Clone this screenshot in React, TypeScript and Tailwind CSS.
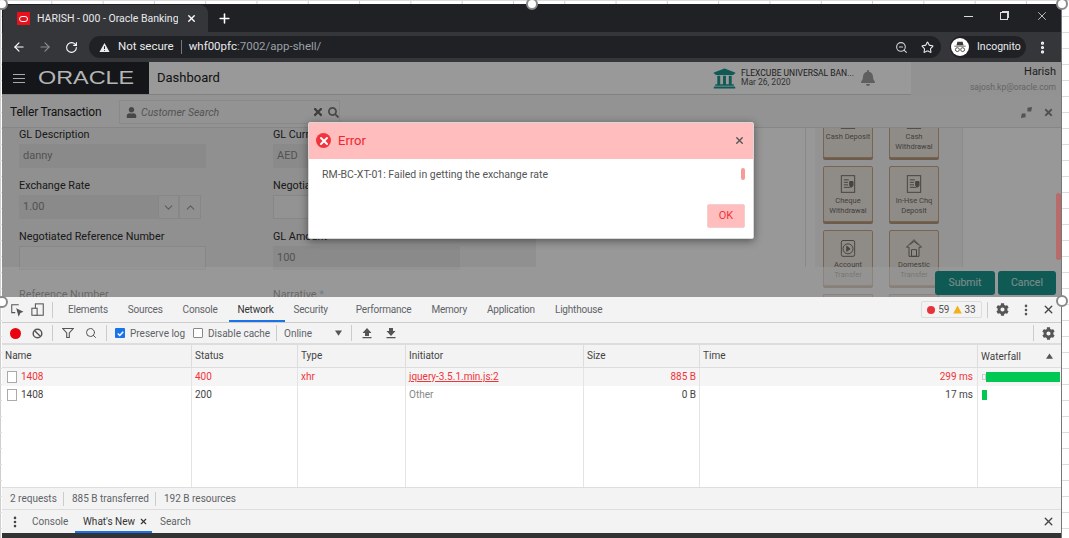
import { ArrowLeft, ArrowRight, ChevronDown, ChevronUp, MoreVertical, Plus, RotateCw, Search, Star, X, ZoomOut } from "lucide-react";
import { FaBell, FaCog, FaSearch, FaTimes, FaUniversity, FaUser } from "react-icons/fa";

const columns = "grid grid-cols-[190px_106px_108px_178px_116px_278px_1fr]";

function Handle({ className }: { className: string }) {
  return <div className={`absolute h-3 w-3 rounded-full border-2 border-[#8a8a8a] bg-white z-40 ${className}`} />;
}

function Field({ label, value, width = "w-[187px]", muted = true }: { label: string; value?: string; width?: string; muted?: boolean }) {
  return (
    <div className="h-[51px] flex flex-col">
      <div className="h-[19px] text-[10.8px] leading-[19px] text-[#2c2c2c] whitespace-nowrap">{label}</div>
      <div className={`h-[24px] ${width} px-1 text-[11px] leading-[24px] text-[#8a8a8a] ${muted ? "bg-[#e6e6e6]" : "bg-[#f6f6f6] border border-[#e2e2e2]"}`}>{value}</div>
    </div>
  );
}

function DocIcon({ kind }: { kind: string }) {
  return (
    <svg viewBox="0 0 24 24" className="h-[20px] w-[20px] shrink-0 text-[#77726c]" fill="none" stroke="currentColor" strokeWidth="1.2">
      {kind === "home" ? (
        <path d="M12 2 3 11h3v11h12V11h3zM9 14h6v8H9zM7 8l5-4 5 4" />
      ) : kind === "play" ? (
        <>
          <rect x="4" y="3" width="16" height="19" rx="2" />
          <circle cx="12" cy="13" r="6" />
          <path d="m10.5 10 4 3-4 3z" fill="currentColor" />
        </>
      ) : (
        <>
          <rect x="4" y="2" width="16" height="20" />
          <path d="M7 7h6M7 10h5M7 13h5M7 16h8" />
          <path d="M14 9h4v5l-2 2-2-2z" fill="currentColor" />
        </>
      )}
    </svg>
  );
}

function TxnCard({ lines, kind }: { lines: string[]; kind: string }) {
  return (
    <div className="h-[56px] w-[50px] flex flex-col items-center pt-[7px] rounded-[2px] bg-[#efe9e2] border border-[#c9a987] shadow-[0_2px_0_#b79a7c] overflow-hidden">
      <DocIcon kind={kind} />
      <div className="mt-[2px] text-[7.5px] leading-[10px] text-center text-[#6f6a64] whitespace-nowrap">
        {lines.map((l) => (
          <div key={l}>{l}</div>
        ))}
      </div>
    </div>
  );
}

function Tab({ label, active }: { label: string; active?: boolean }) {
  return (
    <div className={`relative h-full flex items-center text-[10px] tracking-[-0.2px] ${active ? "text-[#333]" : "text-[#5f6368]"}`}>
      {label}
      {active && <div className="absolute left-[-9px] right-[-11px] bottom-0 h-[2px] bg-[#1a73e8]" />}
    </div>
  );
}

function Divider() {
  return <div className="h-4 w-px bg-[#ccc]" />;
}

function Row({ name, status, type, initiator, size, time, error, bar }: { name: string; status: string; type: string; initiator: string; size: string; time: string; error?: boolean; bar: string }) {
  return (
    <div className={`${columns} h-[18px] text-[10px] leading-[18px] ${error ? "bg-[#f5f5f5] text-[#f0343a]" : "bg-white text-[#444]"}`}>
      <div className="flex items-center pl-[5px] gap-[4px] border-r border-[#e4e4e4]">
        <div className="h-[12px] w-[10px] border border-[#aaa] bg-white" />
        <span>{name}</span>
      </div>
      <div className="pl-[3px] border-r border-[#e4e4e4]">{status}</div>
      <div className="pl-[3px] border-r border-[#e4e4e4]">{type}</div>
      <div className={`pl-[3px] border-r border-[#e4e4e4] ${error ? "underline" : "text-[#888]"}`}>{initiator}</div>
      <div className="pr-[3px] text-right border-r border-[#e4e4e4]">{size}</div>
      <div className="pr-[4px] text-right border-r border-[#e4e4e4]">{time}</div>
      <div className="flex items-center pl-[4px]">
        {error && <div className="h-[6px] w-[4px] border border-[#ccc]" />}
        <div className={`h-[10px] bg-[#00c853] ${bar}`} />
      </div>
    </div>
  );
}

export default function App() {
  return (
    <div className="relative w-[1069px] h-[538px] overflow-hidden bg-white bg-[linear-gradient(#dcdcdc_1px,transparent_1px),linear-gradient(90deg,#cfcfcf_1px,transparent_1px)] bg-[size:51.3px_16px] pt-[4px] pl-[2px] font-['Roboto','Open_Sans',sans-serif]">
      <Handle className="left-[-4px] top-[-2px]" />
      <Handle className="left-[526px] top-[-2px]" />
      <Handle className="left-[1056px] top-[-2px]" />
      <Handle className="left-[-4px] top-[296px]" />
      <Handle className="left-[1056px] top-[295px]" />

      <div className="w-[1060px] h-[534px] flex flex-col border-r border-[#777]">
        {/* Browser tabs */}
        <div className="h-[28px] shrink-0 bg-[#202124] flex items-end relative">
          <div className="h-[27px] w-[205px] ml-[1px] flex items-center rounded-t-lg bg-[#35363a] pl-[14px] text-white">
            <div className="h-[13px] w-[13px] bg-[#e8101c] flex items-center justify-center">
              <div className="h-[6px] w-[9px] rounded-full border-[1.5px] border-white" />
            </div>
            <span className="ml-[7px] w-[141px] overflow-hidden whitespace-nowrap text-[10.5px] text-[#e8eaed]">HARISH - 000 - Oracle Banking | F</span>
            <X size={11} strokeWidth={3} className="ml-[8px]" />
          </div>
          <Plus size={15} strokeWidth={2.5} className="ml-[9px] mb-[6px] text-white" />
          <div className="ml-auto h-full flex items-center gap-[27px] pr-[12px] pb-[4px] text-[#dcdcdc]">
            <div className="h-px w-[9px] bg-[#dcdcdc]" />
            <div className="h-[8px] w-[8px] border border-[#dcdcdc] shadow-[1.5px_-1.5px_0_-0.5px_#dcdcdc]" />
            <X size={14} strokeWidth={1.4} />
          </div>
        </div>

        {/* Browser toolbar */}
        <div className="h-[30px] shrink-0 bg-[#35363a] flex items-center pl-[10px] text-white">
          <ArrowLeft size={14} strokeWidth={2} />
          <ArrowRight size={14} strokeWidth={2} className="ml-[12px] text-[#8a8b8e]" />
          <RotateCw size={13} strokeWidth={2} className="ml-[13px]" />
          <div className="ml-[11px] h-[22px] w-[852px] rounded-full bg-[#202124] flex items-center pl-[10px] pr-[7px] text-[11.5px]">
            <svg viewBox="0 0 12 12" className="h-[11px] w-[11px]"><path d="M6 1 11.5 11H.5z" fill="#e8eaed" /><path d="M6 4.5v3.2M6 8.6v1" stroke="#202124" strokeWidth="1.1" /></svg>
            <span className="ml-[8px] text-[#e8eaed]">Not secure</span>
            <div className="mx-[7px] h-[14px] w-px bg-[#777]" />
            <span className="text-[#e8eaed]">whf00pfc</span>
            <span className="text-[#9aa0a6]">:7002/app-shell/</span>
            <ZoomOut size={13} className="ml-auto text-[#cfd1d4]" />
            <Star size={13} strokeWidth={2} className="ml-[13px] text-[#e8eaed]" />
          </div>
          <div className="ml-[9px] h-[22px] w-[76px] rounded-full bg-[#202124] flex items-center pl-[1px]">
            <div className="h-[18px] w-[18px] rounded-full bg-white flex items-center justify-center">
              <svg viewBox="0 0 16 16" className="h-[14px] w-[14px]" fill="#3c3c3c">
                <path d="M5 2h6l1 4H4zM1.5 6.5h13v1h-13z" />
                <circle cx="5" cy="11" r="2.2" fill="none" stroke="#3c3c3c" />
                <circle cx="11" cy="11" r="2.2" fill="none" stroke="#3c3c3c" />
              </svg>
            </div>
            <span className="ml-[8px] text-[10.5px] text-[#e8eaed]">Incognito</span>
          </div>
          <MoreVertical size={15} strokeWidth={3} className="ml-[9px]" />
        </div>

        {/* Oracle app, dimmed by the dialog overlay */}
        <div className="relative h-[235px] shrink-0 overflow-hidden bg-[#f6f6f6]">
          <div className="h-[33px] flex bg-[#ffffff] border-b border-[#d8d8d8]">
            <div className="w-[147px] flex items-center pl-[11px] bg-[#22252b]">
              <div className="relative z-10 w-[12px] h-[9px] border-y border-[#aaa] flex items-center"><div className="h-px w-full bg-[#aaa]" /></div>
              <span className="relative z-10 ml-[13px] origin-left scale-x-[1.3] font-['Liberation_Sans',sans-serif] text-[18px] text-[#b5b5b5]">ORACLE</span>
            </div>
            <div className="flex-1 flex items-center pl-[8px] text-[13px] text-[#222]">Dashboard</div>
            <div className="flex items-center w-[198px] mr-[150px] text-[#19968e]">
              <FaUniversity size={23} />
              <div className="ml-[5px] w-[108px] text-[#333] leading-[9px] text-[8.5px] whitespace-nowrap">
                <div>FLEXCUBE UNIVERSAL BAN...</div>
                <div className="text-[#555]">Mar 26, 2020</div>
              </div>
              <FaBell size={16} className="ml-[11px] text-[#9e9e9e]" />
            </div>
          </div>
          <div className="absolute right-0 top-0 h-[33px] w-[150px] bg-[#f3f3f3] text-right pr-[5px] pt-[2px]">
            <div className="text-[11px] leading-[16px] text-[#333]">Harish</div>
            <div className="text-[8.5px] leading-[14px] text-[#a8a8a8]">sajosh.kp@oracle.com</div>
          </div>

          <div className="h-[33px] flex items-center border-b border-[#e0e0e0] pl-[8px] pr-[7px] pt-[2px]">
            <span className="w-[109px] text-[12px] tracking-[-0.2px] text-[#222]">Teller Transaction</span>
            <div className="h-[24px] w-[221px] flex items-center border border-[#e4e4e4] pl-[6px] text-[#777]">
              <FaUser size={11} />
              <span className="ml-[4px] pt-[2px] italic text-[10.5px] text-[#8a8a8a]">Customer Search</span>
              <FaTimes size={12} className="ml-auto text-[#666]" />
              <FaSearch size={11} className="ml-[4px] text-[#777]" />
            </div>
            <svg viewBox="0 0 14 14" className="ml-auto h-[13px] w-[13px]" fill="#8a8a8a"><path d="M1 13 6 8v4zM1 13l5-5H2zM13 1 8 6V2zM13 1 8 6h4z" /></svg>
            <FaTimes size={11} className="ml-[10px] text-[#888]" />
          </div>

          <div className="relative h-[169px] flex overflow-hidden bg-[#fdfdfd]">
            <div className="w-[534px] h-[139px] flex gap-[67px] pl-[17px] bg-[#f0f0f0] shrink-0">
              <div className="w-[187px] -mt-[3px]">
                <Field label="GL Description" value="danny" />
                <div className="h-[51px] flex flex-col">
                  <div className="h-[19px] text-[10.8px] leading-[19px] text-[#2c2c2c]">Exchange Rate</div>
                  <div className="h-[24px] flex text-[11px] leading-[24px] text-[#8a8a8a]">
                    <div className="w-[139px] bg-[#e6e6e6] px-1">1.00</div>
                    <div className="w-[21px] border border-[#e2e2e2] flex items-center justify-center text-[#999]"><ChevronDown size={13} /></div>
                    <div className="w-[22px] border border-[#e2e2e2] flex items-center justify-center text-[#999]"><ChevronUp size={13} /></div>
                  </div>
                </div>
                <Field label="Negotiated Reference Number" muted={false} />
                <div className="mt-[9px] text-[10.8px] leading-[16px] text-[#2c2c2c]">Reference Number</div>
              </div>
              <div className="w-[187px] -mt-[3px]">
                <Field label="GL Currency" value="AED" />
                <Field label="Negotiated Rate" muted={false} />
                <Field label="GL Amount" value="100" />
                <div className="mt-[9px] text-[10.8px] leading-[16px] text-[#2c2c2c]">Narrative <span className="text-[#4a90d9]">*</span></div>
              </div>
            </div>
            <div className="w-[268px] shrink-0 ml-[2px] h-[139px] border-r border-[#e4e4e4]" />
            <div className="w-[148px] h-[139px] shrink-0 ml-[9px] bg-[#f6f6f6] border-r border-[#e8e8e8]" />

            {/* Transaction cards, scrolled part way */}
            <div className="absolute left-[821px] top-[-26px] grid grid-cols-[50px_50px] gap-x-[16px] gap-y-[8px]">
              <TxnCard kind="doc" lines={["Cash Deposit"]} />
              <TxnCard kind="doc" lines={["Cash", "Withdrawal"]} />
              <TxnCard kind="doc" lines={["Cheque", "Withdrawal"]} />
              <TxnCard kind="doc" lines={["In-Hse Chq", "Deposit"]} />
              <TxnCard kind="play" lines={["Account", "Transfer"]} />
              <TxnCard kind="home" lines={["Domestic", "Transfer"]} />
              <div className="h-[56px] w-[50px] border border-[#c9a987] bg-[#efe9e2]" />
              <div className="h-[56px] w-[50px] border border-[#c9a987] bg-[#efe9e2]" />
            </div>
          </div>

          {/* Sticky footer */}
          <div className="absolute inset-x-0 bottom-0 h-[30px] bg-white/60 flex items-center justify-end gap-[3px] pr-[5px] pt-[2px]">
            <div className="h-[24px] w-[60px] rounded-[3px] bg-[#19968e] text-white/80 text-[10.5px] flex items-center justify-center">Submit</div>
            <div className="h-[24px] w-[58px] rounded-[3px] bg-[#19968e] text-white/80 text-[10.5px] flex items-center justify-center">Cancel</div>
          </div>

          {/* Overlay */}
          <div className="absolute inset-0 bg-black/40" />
          <div className="absolute right-0 top-[131px] h-[67px] w-[5px] rounded-sm bg-[#b86b68]" />

          {/* Error dialog */}
          <div className="absolute z-20 left-[306px] top-[60px] w-[446px] h-[117px] flex flex-col rounded-[2px] bg-white border border-[#d8d8d8] shadow-[0_2px_8px_rgba(0,0,0,0.45)]">
            <div className="h-[36px] shrink-0 bg-[#ffbdbd] flex items-center pl-[7px] pr-[8px] pb-[1px]">
              <div className="h-[15px] w-[15px] rounded-full bg-[#f4343c] flex items-center justify-center">
                <X size={12} strokeWidth={4} className="text-white" />
              </div>
              <span className="ml-[7px] text-[13px] text-[#f0262e]">Error</span>
              <X size={11} strokeWidth={3} className="ml-auto text-[#555]" />
            </div>
            <div className="relative flex-1 pl-[13px] pt-[8px] text-[10.5px] leading-[16px] text-[#555]">
              RM-BC-XT-01: Failed in getting the exchange rate
              <div className="absolute right-[8px] top-[9px] h-[12px] w-[4px] rounded-sm bg-[#f89a9a]" />
              <div className="absolute right-[8px] bottom-[10px] h-[24px] w-[38px] rounded-[2px] bg-[#ffbdbd] border border-[#f3d0d0] flex items-center justify-center text-[11px] text-[#f0343a]">OK</div>
            </div>
          </div>
        </div>

        {/* DevTools */}
        <div className="flex-1 flex flex-col min-h-0 bg-white">
          <div className="h-[26px] shrink-0 flex items-center bg-[#f3f3f3] border-b border-[#ccc] pl-[8px] pr-[6px]">
            <svg viewBox="0 0 16 16" className="h-[14px] w-[14px]" fill="none" stroke="#555" strokeWidth="1.2"><path d="M10 2H2v9h4" /><path d="m8 7 6 3-2.5 1L10 14z" fill="#555" /></svg>
            <svg viewBox="0 0 16 16" className="ml-[7px] h-[14px] w-[14px]" fill="none" stroke="#555" strokeWidth="1.2"><rect x="5" y="1" width="9" height="13" /><rect x="1" y="6" width="6" height="8" fill="#f3f3f3" /></svg>
            <div className="ml-[7px] h-4 w-px bg-[#ccc]" />
            <div className="ml-[15px] h-full flex items-center gap-[20px]">
              <Tab label="Elements" />
              <Tab label="Sources" />
              <Tab label="Console" />
              <Tab label="Network" active />
              <Tab label="Security" />
            </div>
            <div className="ml-[28px] h-full flex items-center gap-[20px]">
              <Tab label="Performance" />
              <Tab label="Memory" />
              <Tab label="Application" />
              <Tab label="Lighthouse" />
            </div>
            <div className="ml-auto h-[17px] w-[61px] flex items-center justify-center gap-[3px] border border-[#ddd] rounded-[2px] text-[10px] text-[#555]">
              <div className="h-[8px] w-[8px] rounded-full bg-[#e8323a]" />
              <span>59</span>
              <svg viewBox="0 0 10 10" className="h-[9px] w-[9px]"><path d="M5 .5 9.8 9.5H.2z" fill="#f2b01e" /></svg>
              <span>33</span>
            </div>
            <div className="ml-[5px] h-4 w-px bg-[#ccc]" />
            <FaCog size={13} className="ml-[8px] text-[#555]" />
            <MoreVertical size={14} strokeWidth={2.5} className="ml-[10px] text-[#555]" />
            <X size={13} strokeWidth={2.5} className="ml-[9px] text-[#444]" />
          </div>

          <div className="h-[22px] shrink-0 flex items-center bg-[#f3f3f3] border-b-2 border-[#ddd] pl-[8px] pr-[6px] text-[10px] text-[#5f6368]">
            <div className="h-[11px] w-[11px] rounded-full bg-[#e8050f]" />
            <svg viewBox="0 0 12 12" className="ml-[11px] h-[11px] w-[11px]" fill="none" stroke="#555" strokeWidth="1.6"><circle cx="6" cy="6" r="4.7" /><path d="m2.7 2.7 6.6 6.6" /></svg>
            <div className="ml-[9px]"><Divider /></div>
            <svg viewBox="0 0 12 12" className="ml-[9px] h-[12px] w-[12px]" fill="none" stroke="#555" strokeWidth="1.1"><path d="M.8 1.5h10.4L7.3 6v4.5h-2.6V6z" /></svg>
            <Search size={12} strokeWidth={2} className="ml-[11px] text-[#555]" />
            <div className="ml-[9px]"><Divider /></div>
            <div className="ml-[8px] h-[10px] w-[10px] rounded-[1px] bg-[#1a73e8] flex items-center justify-center">
              <svg viewBox="0 0 10 10" className="h-[9px] w-[9px]" fill="none" stroke="white" strokeWidth="1.6"><path d="m2 5 2.2 2.2L8 3" /></svg>
            </div>
            <span className="ml-[5px] w-[54px] whitespace-nowrap">Preserve log</span>
            <div className="ml-[9px] h-[10px] w-[10px] rounded-[1px] border border-[#888] bg-white" />
            <span className="ml-[5px] w-[60px] whitespace-nowrap">Disable cache</span>
            <div className="ml-[8px]"><Divider /></div>
            <span className="ml-[7px] w-[51px]">Online</span>
            <svg viewBox="0 0 8 6" className="h-[6px] w-[7px]" fill="#555"><path d="M0 0h8L4 6z" /></svg>
            <div className="ml-[9px]"><Divider /></div>
            <svg viewBox="0 0 12 12" className="ml-[9px] h-[12px] w-[12px]" fill="#555"><path d="M6 1 10.5 6H8v3H4V6H1.5zM1.5 10h9v1.2h-9z" /></svg>
            <svg viewBox="0 0 12 12" className="ml-[12px] h-[12px] w-[12px]" fill="#555"><path d="M4 1h4v3h2.5L6 9 1.5 4H4zM1.5 10h9v1.2h-9z" /></svg>
            <div className="ml-auto"><Divider /></div>
            <FaCog size={13} className="ml-[8px] text-[#555]" />
          </div>

          <div className="flex-1 min-h-0 flex flex-col bg-white">
            <div className={`${columns} h-[23px] shrink-0 bg-[#f3f3f3] border-b border-[#ddd] text-[10px] leading-[21px] text-[#444]`}>
              <div className="pl-[3px] border-r border-[#ddd]">Name</div>
              <div className="pl-[3px] border-r border-[#ddd]">Status</div>
              <div className="pl-[3px] border-r border-[#ddd]">Type</div>
              <div className="pl-[3px] border-r border-[#ddd]">Initiator</div>
              <div className="pl-[3px] border-r border-[#ddd]">Size</div>
              <div className="pl-[3px] border-r border-[#ddd]">Time</div>
              <div className="pl-[3px] flex items-center justify-between pr-[8px]">
                Waterfall
                <svg viewBox="0 0 8 6" className="h-[6px] w-[7px]" fill="#555"><path d="M0 6h8L4 0z" /></svg>
              </div>
            </div>
            <Row error name="1408" status="400" type="xhr" initiator="jquery-3.5.1.min.js:2" size="885 B" time="299 ms" bar="w-[74px]" />
            <Row name="1408" status="200" type="" initiator="Other" size="0 B" time="17 ms" bar="w-[5px]" />
            <div className={`${columns} flex-1`}>
              <div className="border-r border-[#e4e4e4]" />
              <div className="border-r border-[#e4e4e4]" />
              <div className="border-r border-[#e4e4e4]" />
              <div className="border-r border-[#e4e4e4]" />
              <div className="border-r border-[#e4e4e4]" />
              <div className="border-r border-[#e4e4e4]" />
              <div />
            </div>
          </div>

          <div className="h-[23px] shrink-0 flex items-center bg-[#f3f3f3] border-y border-[#ddd] pl-[8px] text-[10px] text-[#5f6368] whitespace-nowrap">
            <span className="w-[45px]">2 requests</span>
            <div className="mx-[8px] h-[14px] w-px bg-[#ccc]" />
            <span className="w-[75px]">885 B transferred</span>
            <div className="mx-[8px] h-[14px] w-px bg-[#ccc]" />
            <span>192 B resources</span>
          </div>

          <div className="h-[23px] shrink-0 flex items-center bg-[#f3f3f3] pl-[6px] pr-[6px] text-[10px] text-[#5f6368]">
            <MoreVertical size={14} strokeWidth={2.5} className="text-[#444]" />
            <span className="ml-[10px] w-[35px]">Console</span>
            <div className="relative ml-[16px] h-full flex items-center text-[#333]">
              <span className="w-[53px] whitespace-nowrap">What's New</span>
              <X size={9} strokeWidth={3} className="ml-[3px]" />
              <div className="absolute left-[-8px] right-[-4px] bottom-0 h-[2px] bg-[#1a73e8]" />
            </div>
            <span className="ml-[12px]">Search</span>
            <X size={13} strokeWidth={2.5} className="ml-auto text-[#444]" />
          </div>
          <div className="h-[5px] shrink-0 bg-[#333]" />
        </div>
      </div>
    </div>
  );
}
